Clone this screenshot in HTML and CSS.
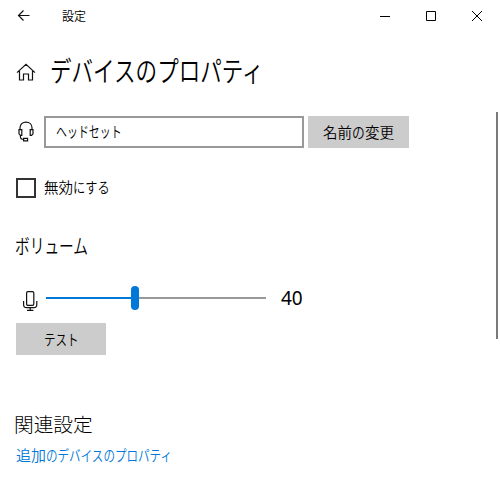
FILE: index.html
```
<!DOCTYPE html>
<html lang="ja">
<head>
<meta charset="utf-8">
<title>設定</title>
<link rel="stylesheet" href="styles.css">
</head>
<body>
<div class="window">
  <header class="titlebar">
    <svg class="back" width="14" height="12" viewBox="0 0 14 12"><path d="M12.5 5.5H1.5M6.5 .5L1.5 5.5l5 5"/></svg>
    <span class="app-name">設定</span>
    <div class="controls">
      <svg width="46" height="32" viewBox="0 0 46 32"><path d="M18 16.5h10"/></svg>
      <svg width="46" height="32" viewBox="0 0 46 32"><path d="M18.5 11.5h9v9h-9z"/></svg>
      <svg width="46" height="32" viewBox="0 0 46 32"><path d="M18 11l10 10M28 11L18 21"/></svg>
    </div>
  </header>
  <div class="page-head">
    <svg class="home" width="20" height="18" viewBox="0 0 20 18"><path d="M1 9.6L10 1.2l9 8.4M3.5 8v9h4v-6h5v6h4V8"/></svg>
    <h1><span class="kana">デバイスのプロパティ</span></h1>
  </div>
  <main class="content">
    <div class="device-row">
      <svg class="headset" width="16" height="22" viewBox="0 0 16 22"><path d="M2 8V6.8C2 3.4 4.6 1.1 8 1.1s6 2.3 6 5.7V8M1 8.6h2.8v5.8H2.4L1 12.8zM15 8.6h-2.8v5.8h1.4l1.4-1.6zM2.4 14.4v1.2c0 1.8 1 2.9 3.2 2.9M5.6 17.3h4v2.6h-4z"/></svg>
      <div class="field"><span class="kana">ヘッドセット</span></div>
      <div class="button rename">名前<span class="kana">の</span>変更</div>
    </div>
    <div class="check-row">
      <span class="checkbox"></span>
      <span class="check-label">無効<span class="kana">にする</span></span>
    </div>
    <h2 class="volume-title"><span class="kana">ボリューム</span></h2>
    <div class="volume-row">
      <svg class="mic" width="16" height="22" viewBox="0 0 16 22"><rect x="4.6" y="1.6" width="7.2" height="13.8" rx="1.3"/><path d="M1.6 11v3.5c0 2 1.1 3.2 3 3.2h7.2c1.9 0 3-1.2 3-3.2V11M8.2 17.7v2.7M5 20.4h6.4"/></svg>
      <div class="slider"><div class="fill"></div><div class="thumb"></div><div class="rest"></div></div>
      <span class="value">40</span>
    </div>
    <div class="button test"><span class="kana">テスト</span></div>
    <h2 class="related-title">関連設定</h2>
    <a class="link">追加<span class="kana">のデバイスのプロパティ</span></a>
  </main>
  <div class="scrollbar"></div>
</div>
</body>
</html>
```
FILE: styles.css
```
* { box-sizing: border-box; }
body {
  margin: 0;
  background: #fff;
  color: #000;
  font-family: "Noto Sans CJK JP", sans-serif;
  font-size: 15px;
  font-weight: 350;
}
.window { position: relative; width: 500px; height: 493px; overflow: hidden; }
svg { display: block; flex: none; fill: none; stroke: #111; stroke-width: 1.2; }
h1, h2 { margin: 0; font-weight: 350; white-space: nowrap; }
.kana { display: inline-block; white-space: nowrap; transform-origin: 0 50%; transform: scaleX(.77); }

.titlebar { display: flex; align-items: center; height: 32px; padding-left: 17px; }
.app-name { margin-left: 31px; font-size: 12px; line-height: 32px; }
.controls { display: flex; margin-left: auto; }
.controls svg { stroke-width: 1; stroke: #000; }

.page-head { display: flex; height: 80px; padding-left: 16px; }
.home { margin-top: 31px; }
h1 { margin-left: 14px; font-size: 28px; line-height: 77px; }

.content { padding: 4px 0 0 16px; }
.device-row { display: flex; height: 32px; }
.headset { margin: 5px 0 0 2px; }
.field { width: 260px; margin-left: 10px; padding-left: 10px; border: 2px solid #999; line-height: 26px; }
.field .kana { transform: scaleX(.73); }
.button { background: #ccc; height: 32px; line-height: 32px; white-space: nowrap; }
.rename { width: 101px; margin-left: 4px; padding-left: 15px; font-size: 14.5px; }
.rename .kana { width: 13px; transform: scaleX(.88); }

.check-row { display: flex; align-items: center; height: 20px; margin-top: 30px; }
.checkbox { width: 20px; height: 20px; border: 2px solid #333; }
.check-label { margin-left: 8px; line-height: 18px; margin-top: -2px; font-size: 14.5px; }
.check-label .kana { transform: scaleX(.84); }

.volume-title { margin-top: 34px; margin-left: -1px; font-size: 20px; line-height: 28px; }
.volume-title .kana { transform: scaleX(.735); }
.volume-row { display: flex; align-items: center; height: 32px; margin-top: 22px; }
.mic { margin: 6px 0 0 6px; }
.slider { display: flex; align-items: center; width: 220px; margin-left: 8px; }
.fill { width: 85px; height: 2px; background: #0078d7; }
.thumb { width: 8px; height: 24px; border-radius: 4px; background: #0078d7; }
.rest { flex: 1; height: 2px; background: #999; }
.value { margin-left: 15px; font: 19px/35px "Noto Sans", sans-serif; }
.test { width: 90px; margin-top: 9px; padding-left: 28px; line-height: 31px; }

.related-title { margin-top: 55px; margin-left: -2px; font-size: 19.7px; line-height: 28px; font-weight: 300; }
.link { display: block; margin-top: 5px; line-height: 23px; color: #0078d7; white-space: nowrap; }

.scrollbar { position: absolute; right: 2px; top: 112px; width: 2px; height: 227px; background: #7a7a7a; }
```
